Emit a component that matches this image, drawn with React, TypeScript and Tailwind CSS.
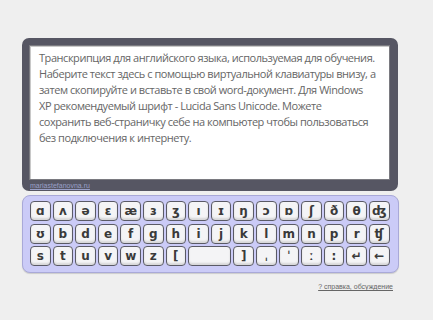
const ROWS: string[][] = [
  ["ɑ", "ʌ", "ə", "ɛ", "æ", "ɜ", "ʒ", "ı", "ɪ", "ŋ", "ɔ", "ɒ", "ʃ", "ð", "θ", "ʤ"],
  ["ʊ", "b", "d", "e", "f", "g", "h", "i", "j", "k", "l", "m", "n", "p", "r", "ʧ"],
  ["s", "t", "u", "v", "w", "z", "[", " ", "]", "ˌ", "ˈ", "ː", ":", "↵", "←"],
];

const LINES = [
  "Транскрипция для английского языка, используемая для обучения.",
  "Наберите текст здесь с помощью виртуальной клавиатуры внизу, а",
  "затем скопируйте и вставьте в свой word-документ. Для Windows",
  "XP рекомендуемый шрифт - Lucida Sans Unicode. Можете",
  "сохранить веб-страничку себе на компьютер чтобы пользоваться",
  "без подключения к интернету.",
];

function Key({ ch }: { ch: string }) {
  const wide = ch === " ";
  return (
    <div
      className={`h-[20px] rounded-[4px] border border-[#5a5a66] bg-[#f4f4f6] shadow-[inset_0_-2px_2px_rgba(0,0,0,0.12)] flex items-center justify-center text-[12px] font-bold text-[#3a3a3a] ${wide ? "col-span-2" : ""}`}
      style={{ fontFamily: '"DejaVu Sans", sans-serif' }}
    >
      {ch}
    </div>
  );
}

export default function App() {
  return (
    <div className="w-[433px] h-[320px] bg-[#efefef] pt-[38px] pl-[22px]">
      <div className="w-[376px] h-[153px] bg-[#565663] rounded-[7px] pt-[7px] pl-[7px]">
        <div
          className="w-[361px] h-[135px] bg-white border border-[#7a7a80] shadow-[inset_1px_1px_0_#c8c8c8] pl-[9px] pt-[4px] text-[11px] tracking-[-0.45px] leading-[16px] text-[#666]"
          style={{ fontFamily: '"Open Sans", sans-serif' }}
        >
          {LINES.map((l, i) => (
            <div key={i} className="whitespace-nowrap">{l}</div>
          ))}
        </div>
        <div className="text-[7px] leading-[10px] mt-[1px] pl-[1px] text-[#9aa0c8] underline" style={{ fontFamily: '"Liberation Sans", sans-serif' }}>
          mariastefanovna.ru
        </div>
      </div>

      <div className="mt-[4px] w-[377px] h-[78px] bg-[#cbcbf7] border border-[#a9a9d8] rounded-[8px] pt-[5px] pl-[7px] shadow-[0_1px_1px_rgba(0,0,0,0.15)]">
        <div className="grid grid-cols-[repeat(16,20.6px)] gap-x-[2px] gap-y-[2.5px]">
          {ROWS.flat().map((ch, i) => (
            <Key key={i} ch={ch} />
          ))}
        </div>
      </div>

      <div className="w-[371px] mt-[9px] text-right text-[7px] leading-[10px] text-[#666] underline" style={{ fontFamily: '"Liberation Sans", sans-serif' }}>
        ? справка, обсуждение
      </div>
    </div>
  );
}
